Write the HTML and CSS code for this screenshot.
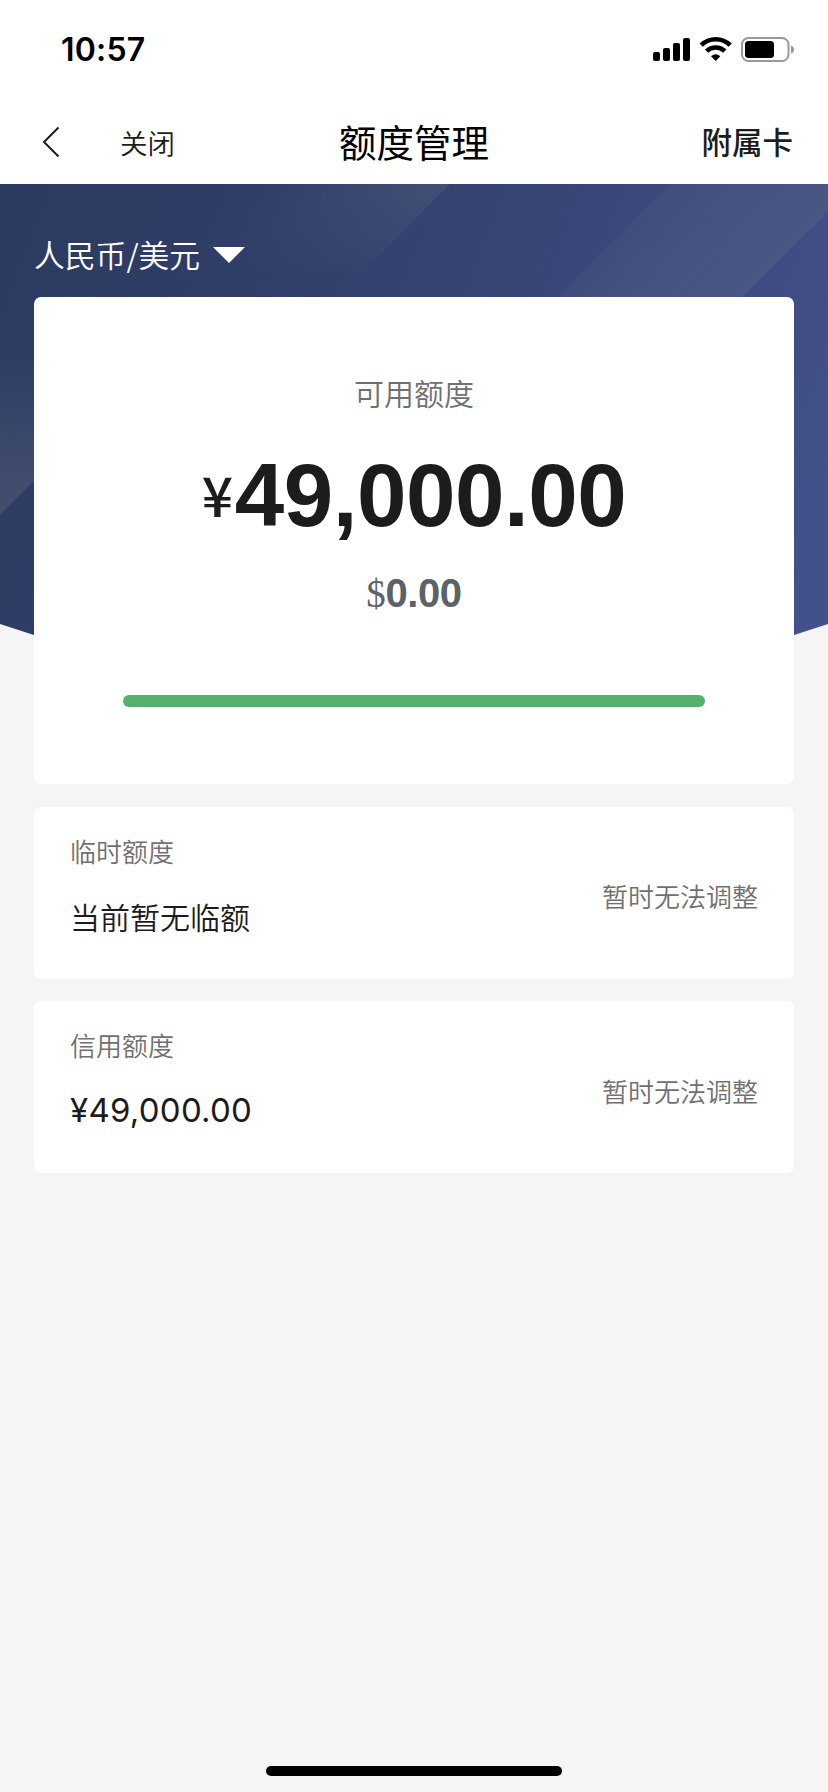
FILE: index.html
```html
<!DOCTYPE html>
<html lang="zh-CN">
<head>
<meta charset="utf-8">
<title>额度管理</title>
<link rel="stylesheet" href="styles.css">
</head>
<body>
<div class="screen">
  <header class="top">
    <div class="status">
      <span class="time">10:57</span>
      <svg class="status-icons" width="144" height="28" viewBox="0 0 144 28">
        <rect x="0" y="16" width="7" height="9" rx="2"/>
        <rect x="10" y="12" width="7" height="13" rx="2"/>
        <rect x="20" y="7" width="7" height="18" rx="2"/>
        <rect x="30" y="2" width="7" height="23" rx="2"/>
        <g fill="none" stroke="#000" stroke-width="4.6">
          <path d="M48.200 9.200A20.500 20.500 0 0 1 77.200 9.200"/>
          <path d="M53.600 15.200A13 13 0 0 1 71.800 15.200"/>
        </g>
        <path d="M58 20.200Q62.700 16.200 67.400 20.200L62.700 24.900Z"/>
        <rect x="89" y="2" width="46.500" height="23" rx="6.500" fill="none" stroke="#999" stroke-width="2"/>
        <rect x="92" y="5" width="29" height="17" rx="3.500"/>
        <path d="M138 9.500Q141 10.500 141 13.500T138 17.500Z" fill="#999"/>
      </svg>
    </div>
    <nav class="nav">
      <div class="nav-left">
        <svg class="back" width="18" height="32" viewBox="0 0 18 32"><path d="M16.500 1.500L2 16L16.500 30.500"/></svg>
        <span class="close">关闭</span>
      </div>
      <h1 class="title">额度管理</h1>
      <span class="extra">附属卡</span>
    </nav>
  </header>
  <main class="main">
    <svg class="hero" width="828" height="510" viewBox="0 184 828 510">
      <defs>
        <linearGradient id="base" x1="0" y1="184" x2="828" y2="500" gradientUnits="userSpaceOnUse">
          <stop offset="0" stop-color="#2c3b60"/><stop offset=".3" stop-color="#303e68"/><stop offset="1" stop-color="#43518a"/>
        </linearGradient>
        <linearGradient id="b1" x1="255" y1="184" x2="352" y2="281" gradientUnits="userSpaceOnUse">
          <stop offset="0" stop-color="#434f75" stop-opacity="0"/><stop offset="1" stop-color="#434f75"/>
        </linearGradient>
        <linearGradient id="b2" x1="630" y1="184" x2="745" y2="299" gradientUnits="userSpaceOnUse">
          <stop offset="0" stop-color="#4a5680" stop-opacity=".1"/><stop offset=".5" stop-color="#485480" stop-opacity=".8"/><stop offset="1" stop-color="#4a5785"/>
        </linearGradient>
        <linearGradient id="b3" x1="0" y1="350" x2="0" y2="515" gradientUnits="userSpaceOnUse">
          <stop offset="0" stop-color="#404d70" stop-opacity="0"/><stop offset=".8" stop-color="#404d6f"/>
        </linearGradient>
        <linearGradient id="down" x1="0" y1="184" x2="0" y2="280" gradientUnits="userSpaceOnUse">
          <stop offset="0" stop-color="#fff"/><stop offset="1" stop-color="#fff" stop-opacity="0"/>
        </linearGradient>
        <mask id="fade"><rect y="184" width="828" height="116" fill="url(#down)"/></mask>
        <clipPath id="curve"><path d="M0 184H828V624Q621 694 414 694T0 624Z"/></clipPath>
      </defs>
      <g clip-path="url(#curve)">
        <rect y="184" width="828" height="510" fill="url(#base)"/>
        <path d="M255 184H450L335 300H139Z" fill="url(#b1)" mask="url(#fade)"/>
        <path d="M670 184H828V211L739 300H554Z" fill="url(#b2)"/>
        <path d="M0 350H165L0 515Z" fill="url(#b3)"/>
      </g>
    </svg>
    <div class="content">
      <div class="currency"><span>人民币/美元</span><svg width="32" height="16" viewBox="0 0 32 16"><path d="M0 0H32L16 16Z"/></svg></div>
      <section class="card available">
        <div class="caption">可用额度</div>
        <div class="amount"><span class="yen">¥</span><span>49,000.00</span></div>
        <div class="usd"><span class="dollar">$</span>0.00</div>
        <div class="bar"></div>
      </section>
      <section class="card row">
        <div class="info"><div class="label">临时额度</div><div class="value">当前暂无临额</div></div>
        <span class="note">暂时无法调整</span>
      </section>
      <section class="card row">
        <div class="info"><div class="label">信用额度</div><div class="value number">¥49,000.00</div></div>
        <span class="note">暂时无法调整</span>
      </section>
    </div>
  </main>
  <footer class="home"><div class="indicator"></div></footer>
</div>
</body>
</html>
```
FILE: styles.css
```css
* { box-sizing: border-box; }
body { margin: 0; background: #f5f5f5; font-family: "Noto Sans CJK SC", sans-serif; color: #1c1c1c; }
.screen { width: 828px; height: 1792px; display: flex; flex-direction: column; overflow: hidden; }
.top { height: 184px; background: #fff; flex: none; }
.status { height: 100px; display: flex; justify-content: space-between; align-items: center; padding: 0 31px 0 61px; }
.time { font: 600 32px/40px Inter, sans-serif; color: #000; letter-spacing: .2px; }
.status-icons { display: block; }
.nav { height: 84px; display: grid; grid-template-columns: 1fr auto 1fr; align-items: center; padding: 0 35px 2px 35px; }
.nav-left { display: flex; align-items: center; gap: 60px; padding: 1px 0 0 7px; }
.back path { fill: none; stroke: #1c1c1c; stroke-width: 2; }
.close { font-size: 27.500px; line-height: 40px; font-weight: 350; }
.title { margin: 0; font-size: 37.500px; line-height: 56px; font-weight: 400; color: #000; }
.extra { justify-self: end; font-size: 30.500px; line-height: 46px; font-weight: 500; }
.main { display: grid; flex: 1; align-content: start; }
.hero, .content { grid-area: 1 / 1; }
.hero { display: block; }
.content { position: relative; padding: 0 34px; }
.currency { height: 113px; padding-top: 27px; display: flex; align-items: flex-start; gap: 13px; color: #fff; font-size: 30.800px; line-height: 86px; font-weight: 350; }
.currency svg { margin-top: 36px; fill: #fff; }
.card { background: #fff; border-radius: 7px; }
.available { height: 487px; display: flex; flex-direction: column; align-items: center; padding-top: 72px; }
.caption { font-size: 30px; line-height: 46px; font-weight: 350; color: #707070; }
.amount { display: flex; height: 100px; margin-top: 30px; font: 700 89px/100px "Liberation Sans", Arial, sans-serif; letter-spacing: -.5px; }
.yen { padding-top: 14px; margin-right: 2px; font: 500 55px/68px "Noto Sans CJK SC", sans-serif; }
.usd { margin-top: 23px; font: 700 40px/50px "Liberation Sans", Arial, sans-serif; letter-spacing: -.4px; color: #5c6368; }
.dollar { font-family: "Liberation Serif", serif; font-weight: 400; font-size: 39px; }
.bar { margin-top: 76px; width: 582px; height: 12px; border-radius: 6px; background: #54b06c; }
.row { height: 172px; margin-top: 23px; padding: 24px 36px 0; display: flex; justify-content: space-between; }
.row + .row { margin-top: 22px; }
.label { font-size: 26px; line-height: 40px; font-weight: 350; color: #707070; }
.value { margin-top: 22px; font-size: 30px; line-height: 46px; font-weight: 350; }
.number { font-family: Inter, sans-serif; font-size: 33px; font-weight: 400; letter-spacing: .25px; }
.note { margin-top: 45px; font-size: 26px; line-height: 40px; font-weight: 350; color: #707070; }
.row + .row .note { margin-top: 46px; }
.home { display: flex; justify-content: center; height: 26px; flex: none; }
.indicator { width: 296px; height: 10px; border-radius: 5px; background: #000; }
```
